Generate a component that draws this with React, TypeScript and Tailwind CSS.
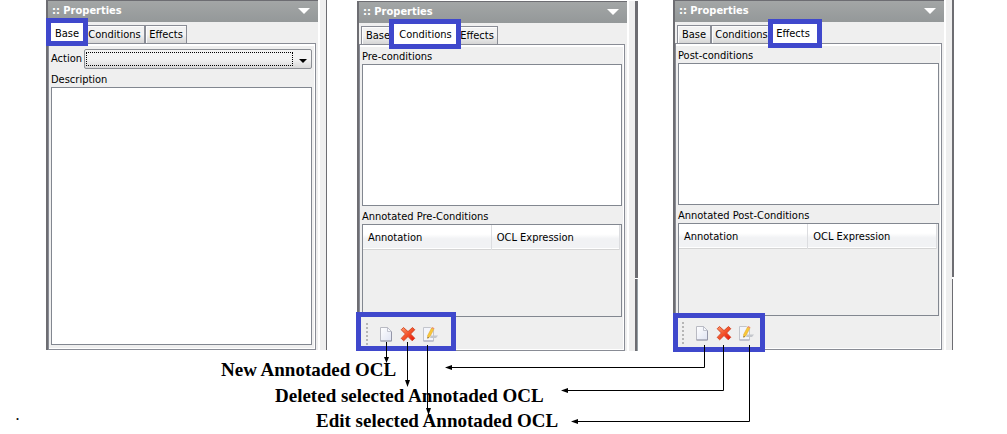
import React from "react";

type TabName = "Base" | "Conditions" | "Effects";

const tabWidths: Record<TabName, string> = {
  Base: "w-[34px]",
  Conditions: "w-[61px]",
  Effects: "w-[42px]",
};

function Tabs({ active, frame }: { active: TabName; frame: string }) {
  return (
    <div role="tablist" className="flex h-[21px] items-end pl-[2px]">
      {(["Base", "Conditions", "Effects"] as TabName[]).map((name) =>
        name === active ? (
          <button
            key={name}
            role="tab"
            aria-selected="true"
            className={`relative z-10 h-[21px] pt-[2px] leading-4 ${tabWidths[name]}`}
          >
            <span className={`absolute border-[5px] border-[#3f48cc] bg-white ${frame}`} />
            <span className="relative flex justify-center whitespace-nowrap">{name}</span>
          </button>
        ) : (
          <button
            key={name}
            role="tab"
            aria-selected="false"
            className={`flex h-[18px] items-center justify-center border border-b-0 border-[#898c95] bg-linear-to-b from-[#f2f2f2] from-50% to-[#d6d6d6] to-100% pt-px leading-4 whitespace-nowrap shadow-[inset_1px_1px_0_#fcfcfc] ${tabWidths[name]}`}
          >
            {name}
          </button>
        ),
      )}
    </div>
  );
}

function Panel({
  active,
  frame,
  edge,
  className = "",
  children,
}: {
  active: TabName;
  frame: string;
  edge: React.ReactNode;
  className?: string;
  children: React.ReactNode;
}) {
  return (
    <section className={`flex min-w-0 flex-1 ${className}`}>
      <div className="flex min-w-0 flex-1 flex-col border-l-2 border-[#6d6d72] bg-[#efefef]">
        <header className="flex h-[22px] items-center justify-between border-t border-[#6d6d72] bg-linear-to-b from-[#a3a6a6] to-[#949899] pr-2 pb-px pl-1 text-white">
          <h2 className="text-[11px] leading-4 font-bold">:: Properties</h2>
          <button aria-label="Panel menu">
            <svg width="12" height="6" viewBox="0 0 12 6">
              <path d="M0 0h12L6 6z" fill="#fff" />
            </svg>
          </button>
        </header>
        <Tabs active={active} frame={frame} />
        <div className="mr-[2px] flex flex-1 flex-col border border-[#898c95] px-[2px] shadow-[inset_0_2px_0_#fff,inset_-1px_-1px_0_#fff]">
          {children}
        </div>
      </div>
      <div className="w-[8px] border-l-2 border-white bg-[#efefef]" />
      {edge}
    </section>
  );
}

function NewIcon() {
  return (
    <svg width="16" height="16" viewBox="0 0 16 16">
      <defs>
        <linearGradient id="sheet" x1="0" y1="0" x2="1" y2="1">
          <stop offset="0" stopColor="#ffffff" />
          <stop offset="1" stopColor="#dfe3f2" />
        </linearGradient>
      </defs>
      <path d="M2.5 1.5h7l4 4v9.500h-11z" fill="url(#sheet)" stroke="#b9bac2" />
      <path d="M13.5 5.5V15h-11" fill="none" stroke="#9496a8" />
      <path d="M9.5 1.5v4h4z" fill="#f7f8fc" stroke="#b4b6c2" strokeWidth=".8" />
    </svg>
  );
}

function DeleteIcon() {
  return (
    <svg width="16" height="16" viewBox="0 0 16 16">
      <defs>
        <linearGradient id="cross" x1="0" y1="0" x2="1" y2="1">
          <stop offset="0" stopColor="#ff9a6c" />
          <stop offset=".5" stopColor="#f4532a" />
          <stop offset="1" stopColor="#e80f08" />
        </linearGradient>
      </defs>
      <path
        d="M3.5 1.5 8 5.6l4.5-4.1 2.3 2.2L10.6 8l4.2 4.3-2.6 2.5L8 10.5l-4.3 4.3-2.5-2.4L5.4 8 1.2 3.7z"
        fill="url(#cross)"
        stroke="#cf4322"
        strokeWidth=".9"
        strokeLinejoin="round"
      />
    </svg>
  );
}

function EditIcon() {
  return (
    <svg width="16" height="16" viewBox="0 0 16 16">
      <path d="M1.5 1.5h7l3 3V15h-10z" fill="#f3f5fc" stroke="#c3c5cc" />
      <path d="M1.5 15h10" stroke="#a9abc0" />
      <path d="M9 9.5h7l-2 2.5H8z" fill="#c4c7cc" />
      <path d="m9.6 2 2.3 1.2-4 7.6-2.2 1.6-.1-2.8z" fill="#f9c83a" stroke="#dba02a" strokeWidth=".5" />
      <path d="m9.6 2 .6-1 2.3 1.2-.6 1z" fill="#ef8d6a" />
      <path d="m5.6 10.9.1 1.5 1.2-.8z" fill="#4b4436" />
    </svg>
  );
}

function Toolbar({ frame }: { frame: string }) {
  return (
    <div role="toolbar" className="relative flex flex-1 items-center pl-1">
      <span className={`absolute z-10 border-[5px] border-[#3f48cc] ${frame}`} />
      <svg width="3" height="24" viewBox="0 0 3 24" className="mr-[6px]">
        {[1, 5, 9, 13, 17, 21].map((y) => (
          <rect key={y} x="0" y={y} width="2" height="2" fill="#b6b6b6" />
        ))}
      </svg>
      <button aria-label="New" className="flex w-[22px] justify-center"><NewIcon /></button>
      <button aria-label="Delete" className="flex w-[22px] justify-center"><DeleteIcon /></button>
      <button aria-label="Edit" className="flex w-[22px] justify-center"><EditIcon /></button>
    </div>
  );
}

function ConditionFields({ kind, frame }: { kind: "Pre" | "Post"; frame: string }) {
  const id = `${kind}-conditions`;
  return (
    <>
      <label htmlFor={id} className="pt-[5px] leading-[14px]">{kind}-conditions</label>
      <textarea
        id={id}
        className="h-[142px] resize-none border border-[#828790] bg-white outline-none"
      />
      <h3 className="pt-1 leading-[14px]">Annotated {kind}-Conditions</h3>
      <div className="h-[93px] border border-[#828790] pr-px">
        <table className="w-full table-fixed border-collapse">
          <thead>
            <tr className="h-6 border-b border-[#d5d5d5] bg-linear-to-b from-white from-40% to-[#f1f2f4] to-60% text-left">
              <th className="border-r border-[#dcdde0] pt-[3px] pl-[5px] font-normal">Annotation</th>
              <th className="border-r border-[#dcdde0] pt-[3px] pl-[5px] font-normal">OCL Expression</th>
            </tr>
          </thead>
        </table>
      </div>
      <Toolbar frame={frame} />
    </>
  );
}

const arrows = [
  { line: "M386.5 342v15", head: "M384 357h5l-2.5 6z" },
  { line: "M407.5 342v40", head: "M405 380h5l-2.5 7z" },
  { line: "M427.5 345v64", head: "M426 408h5l-2.5 7z" },
  { line: "M704.5 345v22.5H452", head: "M445 367.5l7-2.5v5z" },
  { line: "M723.5 345v45.5H568", head: "M561 390.5l7-2.5v5z" },
  { line: "M749.5 345v76.5H578", head: "M571 421.5l7-2.5v5z" },
];

export default function App() {
  return (
    <main className="relative bg-white font-['DejaVu_Sans_Condensed','DejaVu_Sans',sans-serif] text-[11px] text-black">
      <div className="flex pr-[53px] pl-[46px]">
        <Panel
          active="Base"
          frame="-left-[4px] -right-[4px] -top-[4px] -bottom-[3px]"
          className="mr-[30px] h-[350px]"
          edge={<div className="w-px bg-[#6d6d72]" />}
        >
          <div className="flex items-center pt-[5px] pr-px">
            <label htmlFor="action" className="w-[33px] shrink-0 whitespace-nowrap">Action</label>
            <div className="relative flex-1">
              <select
                id="action"
                className="block h-5 w-full appearance-none rounded-xs border border-[#8b8e94] bg-linear-to-b from-[#f3f3f3] from-50% to-[#d9d9d9] outline-none"
              />
              <span className="pointer-events-none absolute top-[3px] right-[19px] bottom-[3px] left-[2px] border border-dotted border-black" />
              <svg width="8" height="4" viewBox="0 0 8 4" className="pointer-events-none absolute top-[10px] right-[5px]">
                <path d="M0 0h8L4 4z" />
              </svg>
            </div>
          </div>
          <label htmlFor="description" className="pt-1 leading-[14px]">Description</label>
          <textarea
            id="description"
            className="mr-px mb-1 flex-1 resize-none border border-[#828790] bg-white outline-none"
          />
        </Panel>
        <Panel
          active="Conditions"
          frame="-left-[6px] -right-[5px] -top-[4px] -bottom-[5px]"
          className="mt-px mr-[35px] h-[350px]"
          edge={
            <div className="flex w-[3px] flex-col">
              <div className="h-[277px] bg-[#6d6d72]" />
              <div className="mt-px flex-1 border-l-2 border-[#6d6d72] bg-[#96a0a6]" />
            </div>
          }
        >
          <ConditionFields kind="Pre" frame="-left-[6px] w-[100px] -top-[5px] -bottom-px" />
        </Panel>
        <Panel
          active="Effects"
          frame="-left-[4px] -right-[8px] -top-[3px] -bottom-[5px]"
          className="h-[350px]"
          edge={
            <div className="flex w-[2px] flex-col">
              <div className="h-[277px] bg-[#6d6d72]" />
              <div className="mt-[2px] w-px flex-1 bg-[#6d6d72]" />
            </div>
          }
        >
          <ConditionFields kind="Post" frame="-left-[5px] w-[92px] -top-[3px] -bottom-[3px]" />
        </Panel>
      </div>
      <div className="pt-[6px] font-['Liberation_Serif',serif] text-[19px] leading-[26px] font-bold">
        <p className="pl-[221px]">New Annotaded OCL</p>
        <p className="pl-[275px]">Deleted selected Annotaded OCL</p>
        <p className="flex items-start">
          <span className="w-[316px] pl-4 text-[12px] leading-[14px]">.</span>
          <span className="leading-6">Edit selected Annotaded OCL</span>
        </p>
      </div>
      <svg
        width="1007"
        height="434"
        viewBox="0 0 1007 434"
        className="pointer-events-none absolute top-0 left-0 z-20"
      >
        {arrows.map(({ line, head }) => (
          <g key={line}>
            <path d={line} fill="none" stroke="#000" />
            <path d={head} fill="#000" />
          </g>
        ))}
      </svg>
    </main>
  );
}
